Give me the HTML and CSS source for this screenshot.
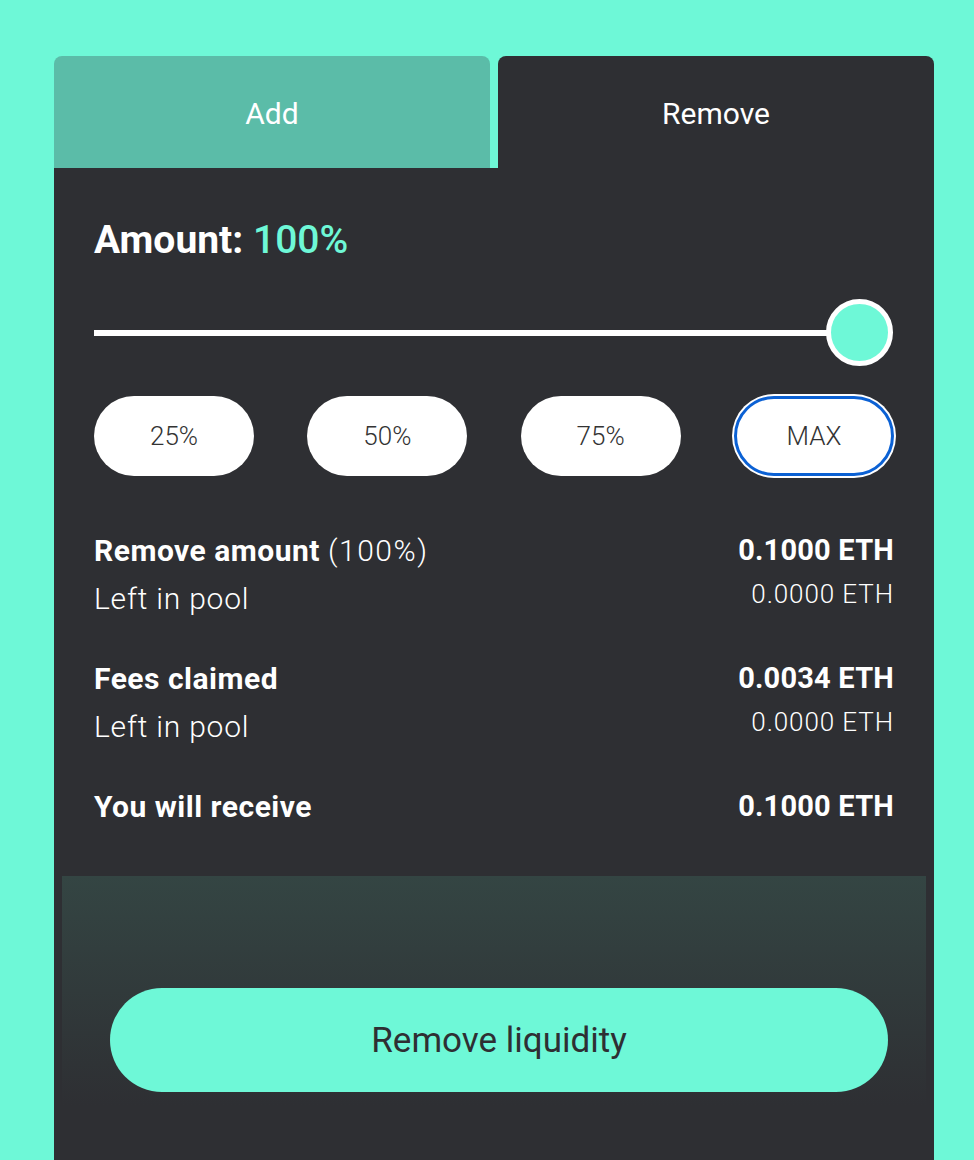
FILE: index.html
```html
<!DOCTYPE html>
<html>
<head>
<meta charset="utf-8">
<link rel="stylesheet" href="styles.css">
</head>
<body>
<div class="card">
  <div class="tabs">
    <div class="tab tab-add">Add</div>
    <div class="tab tab-remove">Remove</div>
  </div>
  <div class="panel">
    <h2 class="amount">Amount: <span class="accent">100%</span></h2>
    <div class="slider">
      <div class="track"></div>
      <div class="thumb"></div>
    </div>
    <div class="presets">
      <button class="preset">25%</button>
      <button class="preset">50%</button>
      <button class="preset">75%</button>
      <button class="preset preset-active">MAX</button>
    </div>
    <div class="group group-first">
      <div class="row"><span class="label strong">Remove amount <span class="light paren">(100%)</span></span><span class="value strong">0.1000 ETH</span></div>
      <div class="row"><span class="label light">Left in pool</span><span class="value small">0.0000 ETH</span></div>
    </div>
    <div class="group">
      <div class="row"><span class="label strong">Fees claimed</span><span class="value strong">0.0034 ETH</span></div>
      <div class="row"><span class="label light">Left in pool</span><span class="value small">0.0000 ETH</span></div>
    </div>
    <div class="group">
      <div class="row"><span class="label strong">You will receive</span><span class="value strong">0.1000 ETH</span></div>
    </div>
    <div class="footer">
      <button class="submit">Remove liquidity</button>
    </div>
  </div>
</div>
</body>
</html>
```
FILE: styles.css
```css
html, body {
  margin: 0;
  padding: 0;
  background: #6ef8d7;
  font-family: Roboto, "Liberation Sans", sans-serif;
  overflow: hidden;
}
.card {
  width: 880px;
  margin: 56px 0 0 54px;
}
.tabs {
  display: grid;
  grid-template-columns: 1fr 1fr;
  gap: 8px;
}
.tab {
  height: 112px;
  line-height: 116px;
  text-align: center;
  font-size: 30px;
  color: #fff;
  border-radius: 8px 8px 0 0;
}
.tab-add { background: #5bbca8; }
.tab-remove { background: #2e2f33; }
.panel {
  background: #2e2f33;
  padding: 49px 40px 0;
  color: #fff;
}
.amount {
  margin: 0;
  font-size: 39px;
  line-height: 46px;
  font-weight: 700;
}
.accent { color: #6ef8d7; font-weight: 500; }
.slider {
  position: relative;
  height: 68px;
  margin-top: 36px;
  display: flex;
  align-items: center;
}
.track {
  width: 770px;
  height: 6px;
  background: #fff;
}
.thumb {
  position: absolute;
  right: 1px;
  top: 0;
  width: 57px;
  height: 57px;
  border: 5px solid #fff;
  border-radius: 50%;
  background: #6ef8d7;
}
.presets {
  display: flex;
  justify-content: space-between;
  margin-top: 29px;
}
.preset {
  width: 160px;
  height: 80px;
  border: none;
  border-radius: 40px;
  background: #fff;
  color: #333;
  font-family: inherit;
  font-size: 26px;
  font-weight: 300;
  padding: 0;
}
.preset-active {
  border: 3px solid #0b61d4;
  box-shadow: 0 0 0 2px #fff;
}
.group { margin-top: 32px; }
.group-first { margin-top: 50px; }
.row {
  display: flex;
  justify-content: space-between;
  align-items: center;
  height: 48px;
}
.label { font-size: 30px; letter-spacing: 0.8px; }
.label.strong { font-size: 30px; letter-spacing: 0.5px; }
.paren { letter-spacing: 1.5px; }
.strong { font-weight: 700; }
.light { font-weight: 300; }
.value.strong { font-size: 29px; letter-spacing: 0.2px; }
.value.small { font-size: 26px; font-weight: 300; margin-top: -8px; letter-spacing: 0.9px; }
.footer {
  margin: 46px -32px 0;
  padding: 112px 38px 90px 48px;
  background: linear-gradient(#344543, #2e2f33 75%);
}
.submit {
  display: block;
  width: 100%;
  height: 104px;
  border: none;
  border-radius: 52px;
  background: #6ef8d7;
  color: #2e2f33;
  font-family: inherit;
  font-size: 35px;
  font-weight: 400;
}
```
